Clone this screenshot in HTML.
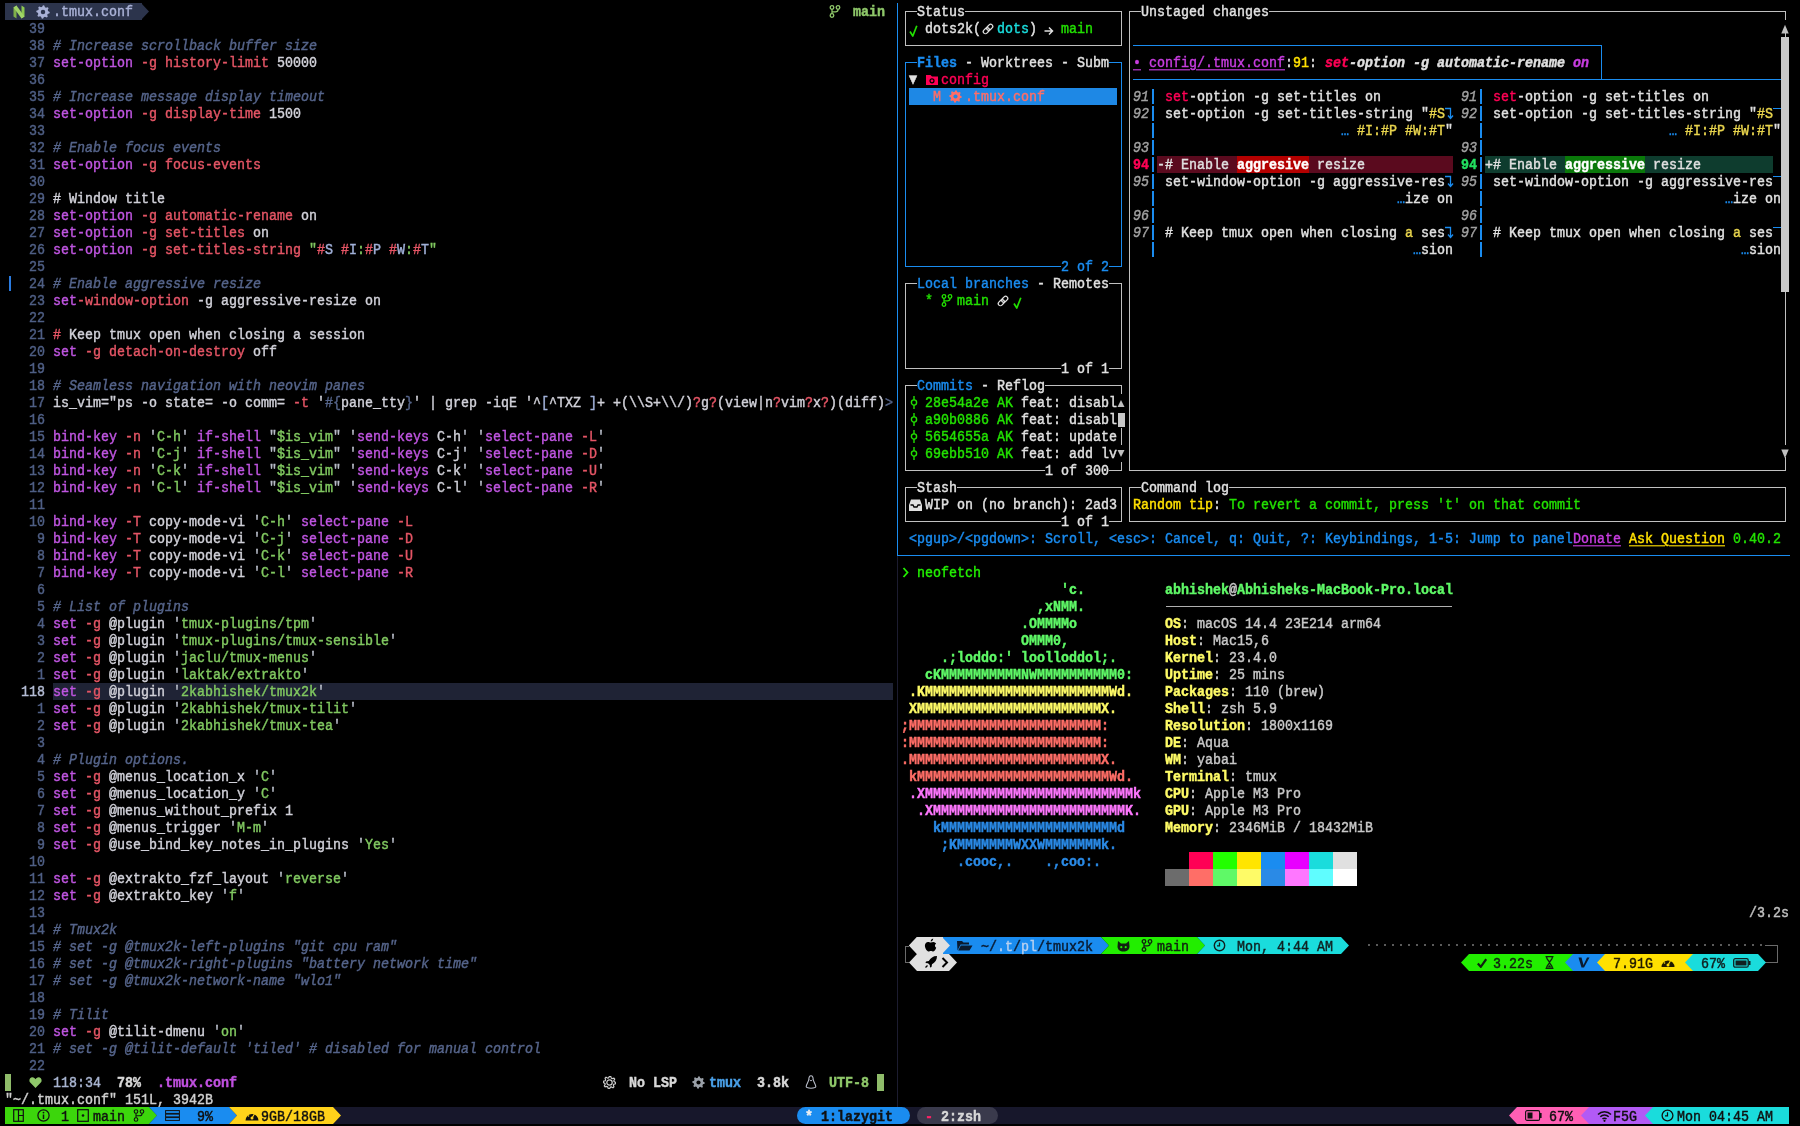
<!DOCTYPE html>
<html><head><meta charset="utf-8"><style>
html,body{margin:0;padding:0;background:#000;}
body{width:1800px;height:1126px;position:relative;overflow:hidden;font-family:"Liberation Mono",monospace;font-size:13.333px;}
#w{position:absolute;left:0;top:0;width:1800px;height:1126px;will-change:transform;}
.t{position:absolute;height:17px;line-height:17px;white-space:pre;padding-top:1px;box-sizing:border-box;-webkit-text-stroke:0.4px currentColor;transform:scaleY(1.12);transform-origin:0 13px;}
.r{position:absolute;}
</style></head><body>
<div id="w">
<div class="r" style="left:53px;top:683px;width:840px;height:17px;background:#1f2335;"></div>
<div class="t" style="left:29px;top:20px;color:#4f5f85;">39</div>
<div class="t" style="left:29px;top:37px;color:#4f5f85;">38</div>
<div class="t" style="left:53px;top:37px;color:#55648a;font-style:italic;"># Increase scrollback buffer size</div>
<div class="t" style="left:29px;top:54px;color:#4f5f85;">37</div>
<div class="t" style="left:53px;top:54px;color:#bf55e0;">set-option </div>
<div class="t" style="left:141px;top:54px;color:#e45565;">-g history-limit </div>
<div class="t" style="left:277px;top:54px;color:#d0d0d8;">50000</div>
<div class="t" style="left:29px;top:71px;color:#4f5f85;">36</div>
<div class="t" style="left:29px;top:88px;color:#4f5f85;">35</div>
<div class="t" style="left:53px;top:88px;color:#55648a;font-style:italic;"># Increase message display timeout</div>
<div class="t" style="left:29px;top:105px;color:#4f5f85;">34</div>
<div class="t" style="left:53px;top:105px;color:#bf55e0;">set-option </div>
<div class="t" style="left:141px;top:105px;color:#e45565;">-g display-time </div>
<div class="t" style="left:269px;top:105px;color:#d0d0d8;">1500</div>
<div class="t" style="left:29px;top:122px;color:#4f5f85;">33</div>
<div class="t" style="left:29px;top:139px;color:#4f5f85;">32</div>
<div class="t" style="left:53px;top:139px;color:#55648a;font-style:italic;"># Enable focus events</div>
<div class="t" style="left:29px;top:156px;color:#4f5f85;">31</div>
<div class="t" style="left:53px;top:156px;color:#bf55e0;">set-option </div>
<div class="t" style="left:141px;top:156px;color:#e45565;">-g focus-events</div>
<div class="t" style="left:29px;top:173px;color:#4f5f85;">30</div>
<div class="t" style="left:29px;top:190px;color:#4f5f85;">29</div>
<div class="t" style="left:53px;top:190px;color:#d0d0d8;"># Window title</div>
<div class="t" style="left:29px;top:207px;color:#4f5f85;">28</div>
<div class="t" style="left:53px;top:207px;color:#bf55e0;">set-option </div>
<div class="t" style="left:141px;top:207px;color:#e45565;">-g automatic-rename </div>
<div class="t" style="left:301px;top:207px;color:#d0d0d8;">on</div>
<div class="t" style="left:29px;top:224px;color:#4f5f85;">27</div>
<div class="t" style="left:53px;top:224px;color:#bf55e0;">set-option </div>
<div class="t" style="left:141px;top:224px;color:#e45565;">-g set-titles </div>
<div class="t" style="left:253px;top:224px;color:#d0d0d8;">on</div>
<div class="t" style="left:29px;top:241px;color:#4f5f85;">26</div>
<div class="t" style="left:53px;top:241px;color:#bf55e0;">set-option </div>
<div class="t" style="left:141px;top:241px;color:#e45565;">-g set-titles-string </div>
<div class="t" style="left:309px;top:241px;color:#80c860;">"</div>
<div class="t" style="left:317px;top:241px;color:#e45565;">#</div>
<div class="t" style="left:325px;top:241px;color:#a0b0d8;">S </div>
<div class="t" style="left:341px;top:241px;color:#e45565;">#</div>
<div class="t" style="left:349px;top:241px;color:#a0b0d8;">I</div>
<div class="t" style="left:357px;top:241px;color:#80c860;">:</div>
<div class="t" style="left:365px;top:241px;color:#e45565;">#</div>
<div class="t" style="left:373px;top:241px;color:#a0b0d8;">P </div>
<div class="t" style="left:389px;top:241px;color:#e45565;">#</div>
<div class="t" style="left:397px;top:241px;color:#a0b0d8;">W</div>
<div class="t" style="left:405px;top:241px;color:#80c860;">:</div>
<div class="t" style="left:413px;top:241px;color:#e45565;">#</div>
<div class="t" style="left:421px;top:241px;color:#a0b0d8;">T</div>
<div class="t" style="left:429px;top:241px;color:#80c860;">"</div>
<div class="t" style="left:29px;top:258px;color:#4f5f85;">25</div>
<div class="t" style="left:29px;top:275px;color:#4f5f85;">24</div>
<div class="t" style="left:53px;top:275px;color:#55648a;font-style:italic;"># Enable aggressive resize</div>
<div class="t" style="left:29px;top:292px;color:#4f5f85;">23</div>
<div class="t" style="left:53px;top:292px;color:#bf55e0;">set</div>
<div class="t" style="left:77px;top:292px;color:#e45565;">-window-option </div>
<div class="t" style="left:197px;top:292px;color:#d0d0d8;">-g aggressive-resize on</div>
<div class="t" style="left:29px;top:309px;color:#4f5f85;">22</div>
<div class="t" style="left:29px;top:326px;color:#4f5f85;">21</div>
<div class="t" style="left:53px;top:326px;color:#e45565;"># </div>
<div class="t" style="left:69px;top:326px;color:#d0d0d8;">Keep tmux open when closing a session</div>
<div class="t" style="left:29px;top:343px;color:#4f5f85;">20</div>
<div class="t" style="left:53px;top:343px;color:#bf55e0;">set </div>
<div class="t" style="left:85px;top:343px;color:#e45565;">-g detach-on-destroy </div>
<div class="t" style="left:253px;top:343px;color:#d0d0d8;">off</div>
<div class="t" style="left:29px;top:360px;color:#4f5f85;">19</div>
<div class="t" style="left:29px;top:377px;color:#4f5f85;">18</div>
<div class="t" style="left:53px;top:377px;color:#55648a;font-style:italic;"># Seamless navigation with neovim panes</div>
<div class="t" style="left:29px;top:394px;color:#4f5f85;">17</div>
<div class="t" style="left:53px;top:394px;color:#d0d0d8;">is_vim="ps -o state= -o comm= </div>
<div class="t" style="left:293px;top:394px;color:#e45565;">-t </div>
<div class="t" style="left:317px;top:394px;color:#d0d0d8;">'</div>
<div class="t" style="left:325px;top:394px;color:#55648a;">#{</div>
<div class="t" style="left:341px;top:394px;color:#d0d0d8;">pane_tty</div>
<div class="t" style="left:405px;top:394px;color:#55648a;">}</div>
<div class="t" style="left:413px;top:394px;color:#d0d0d8;">' | grep -iqE '^</div>
<div class="t" style="left:541px;top:394px;color:#a0b0d8;">[</div>
<div class="t" style="left:549px;top:394px;color:#d0d0d8;">^TXZ </div>
<div class="t" style="left:589px;top:394px;color:#a0b0d8;">]</div>
<div class="t" style="left:597px;top:394px;color:#d0d0d8;">+ +(\\S+\\/)</div>
<div class="t" style="left:693px;top:394px;color:#e45565;">?</div>
<div class="t" style="left:701px;top:394px;color:#d0d0d8;">g</div>
<div class="t" style="left:709px;top:394px;color:#e45565;">?</div>
<div class="t" style="left:717px;top:394px;color:#d0d0d8;">(view|n</div>
<div class="t" style="left:773px;top:394px;color:#e45565;">?</div>
<div class="t" style="left:781px;top:394px;color:#d0d0d8;">vim</div>
<div class="t" style="left:805px;top:394px;color:#e45565;">?</div>
<div class="t" style="left:813px;top:394px;color:#d0d0d8;">x</div>
<div class="t" style="left:821px;top:394px;color:#e45565;">?</div>
<div class="t" style="left:829px;top:394px;color:#d0d0d8;">)(diff)</div>
<div class="t" style="left:885px;top:394px;color:#55648a;">&gt;</div>
<div class="t" style="left:29px;top:411px;color:#4f5f85;">16</div>
<div class="t" style="left:29px;top:428px;color:#4f5f85;">15</div>
<div class="t" style="left:53px;top:428px;color:#bf55e0;">bind-key </div>
<div class="t" style="left:125px;top:428px;color:#e45565;">-n </div>
<div class="t" style="left:149px;top:428px;color:#b8bcc8;">'</div>
<div class="t" style="left:157px;top:428px;color:#80c860;">C-h</div>
<div class="t" style="left:181px;top:428px;color:#b8bcc8;">' </div>
<div class="t" style="left:197px;top:428px;color:#bf55e0;">if-shell </div>
<div class="t" style="left:269px;top:428px;color:#b8bcc8;">"</div>
<div class="t" style="left:277px;top:428px;color:#80c860;">$is_vim</div>
<div class="t" style="left:333px;top:428px;color:#b8bcc8;">" </div>
<div class="t" style="left:349px;top:428px;color:#b8bcc8;">'</div>
<div class="t" style="left:357px;top:428px;color:#bf55e0;">send-keys </div>
<div class="t" style="left:437px;top:428px;color:#d0d0d8;">C-h</div>
<div class="t" style="left:461px;top:428px;color:#b8bcc8;">' </div>
<div class="t" style="left:477px;top:428px;color:#b8bcc8;">'</div>
<div class="t" style="left:485px;top:428px;color:#bf55e0;">select-pane </div>
<div class="t" style="left:581px;top:428px;color:#e45565;">-L</div>
<div class="t" style="left:597px;top:428px;color:#b8bcc8;">'</div>
<div class="t" style="left:29px;top:445px;color:#4f5f85;">14</div>
<div class="t" style="left:53px;top:445px;color:#bf55e0;">bind-key </div>
<div class="t" style="left:125px;top:445px;color:#e45565;">-n </div>
<div class="t" style="left:149px;top:445px;color:#b8bcc8;">'</div>
<div class="t" style="left:157px;top:445px;color:#80c860;">C-j</div>
<div class="t" style="left:181px;top:445px;color:#b8bcc8;">' </div>
<div class="t" style="left:197px;top:445px;color:#bf55e0;">if-shell </div>
<div class="t" style="left:269px;top:445px;color:#b8bcc8;">"</div>
<div class="t" style="left:277px;top:445px;color:#80c860;">$is_vim</div>
<div class="t" style="left:333px;top:445px;color:#b8bcc8;">" </div>
<div class="t" style="left:349px;top:445px;color:#b8bcc8;">'</div>
<div class="t" style="left:357px;top:445px;color:#bf55e0;">send-keys </div>
<div class="t" style="left:437px;top:445px;color:#d0d0d8;">C-j</div>
<div class="t" style="left:461px;top:445px;color:#b8bcc8;">' </div>
<div class="t" style="left:477px;top:445px;color:#b8bcc8;">'</div>
<div class="t" style="left:485px;top:445px;color:#bf55e0;">select-pane </div>
<div class="t" style="left:581px;top:445px;color:#e45565;">-D</div>
<div class="t" style="left:597px;top:445px;color:#b8bcc8;">'</div>
<div class="t" style="left:29px;top:462px;color:#4f5f85;">13</div>
<div class="t" style="left:53px;top:462px;color:#bf55e0;">bind-key </div>
<div class="t" style="left:125px;top:462px;color:#e45565;">-n </div>
<div class="t" style="left:149px;top:462px;color:#b8bcc8;">'</div>
<div class="t" style="left:157px;top:462px;color:#80c860;">C-k</div>
<div class="t" style="left:181px;top:462px;color:#b8bcc8;">' </div>
<div class="t" style="left:197px;top:462px;color:#bf55e0;">if-shell </div>
<div class="t" style="left:269px;top:462px;color:#b8bcc8;">"</div>
<div class="t" style="left:277px;top:462px;color:#80c860;">$is_vim</div>
<div class="t" style="left:333px;top:462px;color:#b8bcc8;">" </div>
<div class="t" style="left:349px;top:462px;color:#b8bcc8;">'</div>
<div class="t" style="left:357px;top:462px;color:#bf55e0;">send-keys </div>
<div class="t" style="left:437px;top:462px;color:#d0d0d8;">C-k</div>
<div class="t" style="left:461px;top:462px;color:#b8bcc8;">' </div>
<div class="t" style="left:477px;top:462px;color:#b8bcc8;">'</div>
<div class="t" style="left:485px;top:462px;color:#bf55e0;">select-pane </div>
<div class="t" style="left:581px;top:462px;color:#e45565;">-U</div>
<div class="t" style="left:597px;top:462px;color:#b8bcc8;">'</div>
<div class="t" style="left:29px;top:479px;color:#4f5f85;">12</div>
<div class="t" style="left:53px;top:479px;color:#bf55e0;">bind-key </div>
<div class="t" style="left:125px;top:479px;color:#e45565;">-n </div>
<div class="t" style="left:149px;top:479px;color:#b8bcc8;">'</div>
<div class="t" style="left:157px;top:479px;color:#80c860;">C-l</div>
<div class="t" style="left:181px;top:479px;color:#b8bcc8;">' </div>
<div class="t" style="left:197px;top:479px;color:#bf55e0;">if-shell </div>
<div class="t" style="left:269px;top:479px;color:#b8bcc8;">"</div>
<div class="t" style="left:277px;top:479px;color:#80c860;">$is_vim</div>
<div class="t" style="left:333px;top:479px;color:#b8bcc8;">" </div>
<div class="t" style="left:349px;top:479px;color:#b8bcc8;">'</div>
<div class="t" style="left:357px;top:479px;color:#bf55e0;">send-keys </div>
<div class="t" style="left:437px;top:479px;color:#d0d0d8;">C-l</div>
<div class="t" style="left:461px;top:479px;color:#b8bcc8;">' </div>
<div class="t" style="left:477px;top:479px;color:#b8bcc8;">'</div>
<div class="t" style="left:485px;top:479px;color:#bf55e0;">select-pane </div>
<div class="t" style="left:581px;top:479px;color:#e45565;">-R</div>
<div class="t" style="left:597px;top:479px;color:#b8bcc8;">'</div>
<div class="t" style="left:29px;top:496px;color:#4f5f85;">11</div>
<div class="t" style="left:29px;top:513px;color:#4f5f85;">10</div>
<div class="t" style="left:53px;top:513px;color:#bf55e0;">bind-key </div>
<div class="t" style="left:125px;top:513px;color:#e45565;">-T </div>
<div class="t" style="left:149px;top:513px;color:#d0d0d8;">copy-mode-vi </div>
<div class="t" style="left:253px;top:513px;color:#b8bcc8;">'</div>
<div class="t" style="left:261px;top:513px;color:#80c860;">C-h</div>
<div class="t" style="left:285px;top:513px;color:#b8bcc8;">' </div>
<div class="t" style="left:301px;top:513px;color:#bf55e0;">select-pane </div>
<div class="t" style="left:397px;top:513px;color:#e45565;">-L</div>
<div class="t" style="left:37px;top:530px;color:#4f5f85;">9</div>
<div class="t" style="left:53px;top:530px;color:#bf55e0;">bind-key </div>
<div class="t" style="left:125px;top:530px;color:#e45565;">-T </div>
<div class="t" style="left:149px;top:530px;color:#d0d0d8;">copy-mode-vi </div>
<div class="t" style="left:253px;top:530px;color:#b8bcc8;">'</div>
<div class="t" style="left:261px;top:530px;color:#80c860;">C-j</div>
<div class="t" style="left:285px;top:530px;color:#b8bcc8;">' </div>
<div class="t" style="left:301px;top:530px;color:#bf55e0;">select-pane </div>
<div class="t" style="left:397px;top:530px;color:#e45565;">-D</div>
<div class="t" style="left:37px;top:547px;color:#4f5f85;">8</div>
<div class="t" style="left:53px;top:547px;color:#bf55e0;">bind-key </div>
<div class="t" style="left:125px;top:547px;color:#e45565;">-T </div>
<div class="t" style="left:149px;top:547px;color:#d0d0d8;">copy-mode-vi </div>
<div class="t" style="left:253px;top:547px;color:#b8bcc8;">'</div>
<div class="t" style="left:261px;top:547px;color:#80c860;">C-k</div>
<div class="t" style="left:285px;top:547px;color:#b8bcc8;">' </div>
<div class="t" style="left:301px;top:547px;color:#bf55e0;">select-pane </div>
<div class="t" style="left:397px;top:547px;color:#e45565;">-U</div>
<div class="t" style="left:37px;top:564px;color:#4f5f85;">7</div>
<div class="t" style="left:53px;top:564px;color:#bf55e0;">bind-key </div>
<div class="t" style="left:125px;top:564px;color:#e45565;">-T </div>
<div class="t" style="left:149px;top:564px;color:#d0d0d8;">copy-mode-vi </div>
<div class="t" style="left:253px;top:564px;color:#b8bcc8;">'</div>
<div class="t" style="left:261px;top:564px;color:#80c860;">C-l</div>
<div class="t" style="left:285px;top:564px;color:#b8bcc8;">' </div>
<div class="t" style="left:301px;top:564px;color:#bf55e0;">select-pane </div>
<div class="t" style="left:397px;top:564px;color:#e45565;">-R</div>
<div class="t" style="left:37px;top:581px;color:#4f5f85;">6</div>
<div class="t" style="left:37px;top:598px;color:#4f5f85;">5</div>
<div class="t" style="left:53px;top:598px;color:#55648a;font-style:italic;"># List of plugins</div>
<div class="t" style="left:37px;top:615px;color:#4f5f85;">4</div>
<div class="t" style="left:53px;top:615px;color:#bf55e0;">set </div>
<div class="t" style="left:85px;top:615px;color:#e45565;">-g </div>
<div class="t" style="left:109px;top:615px;color:#d0d0d8;">@plugin </div>
<div class="t" style="left:173px;top:615px;color:#b8bcc8;">'</div>
<div class="t" style="left:181px;top:615px;color:#80c860;">tmux-plugins/tpm</div>
<div class="t" style="left:309px;top:615px;color:#b8bcc8;">'</div>
<div class="t" style="left:37px;top:632px;color:#4f5f85;">3</div>
<div class="t" style="left:53px;top:632px;color:#bf55e0;">set </div>
<div class="t" style="left:85px;top:632px;color:#e45565;">-g </div>
<div class="t" style="left:109px;top:632px;color:#d0d0d8;">@plugin </div>
<div class="t" style="left:173px;top:632px;color:#b8bcc8;">'</div>
<div class="t" style="left:181px;top:632px;color:#80c860;">tmux-plugins/tmux-sensible</div>
<div class="t" style="left:389px;top:632px;color:#b8bcc8;">'</div>
<div class="t" style="left:37px;top:649px;color:#4f5f85;">2</div>
<div class="t" style="left:53px;top:649px;color:#bf55e0;">set </div>
<div class="t" style="left:85px;top:649px;color:#e45565;">-g </div>
<div class="t" style="left:109px;top:649px;color:#d0d0d8;">@plugin </div>
<div class="t" style="left:173px;top:649px;color:#b8bcc8;">'</div>
<div class="t" style="left:181px;top:649px;color:#80c860;">jaclu/tmux-menus</div>
<div class="t" style="left:309px;top:649px;color:#b8bcc8;">'</div>
<div class="t" style="left:37px;top:666px;color:#4f5f85;">1</div>
<div class="t" style="left:53px;top:666px;color:#bf55e0;">set </div>
<div class="t" style="left:85px;top:666px;color:#e45565;">-g </div>
<div class="t" style="left:109px;top:666px;color:#d0d0d8;">@plugin </div>
<div class="t" style="left:173px;top:666px;color:#b8bcc8;">'</div>
<div class="t" style="left:181px;top:666px;color:#80c860;">laktak/extrakto</div>
<div class="t" style="left:301px;top:666px;color:#b8bcc8;">'</div>
<div class="t" style="left:21px;top:683px;color:#b4bcd4;">118</div>
<div class="t" style="left:53px;top:683px;color:#bf55e0;">set </div>
<div class="t" style="left:85px;top:683px;color:#e45565;">-g </div>
<div class="t" style="left:109px;top:683px;color:#d0d0d8;">@plugin </div>
<div class="t" style="left:173px;top:683px;color:#b8bcc8;">'</div>
<div class="t" style="left:181px;top:683px;color:#80c860;">2kabhishek/tmux2k</div>
<div class="t" style="left:317px;top:683px;color:#b8bcc8;">'</div>
<div class="t" style="left:37px;top:700px;color:#4f5f85;">1</div>
<div class="t" style="left:53px;top:700px;color:#bf55e0;">set </div>
<div class="t" style="left:85px;top:700px;color:#e45565;">-g </div>
<div class="t" style="left:109px;top:700px;color:#d0d0d8;">@plugin </div>
<div class="t" style="left:173px;top:700px;color:#b8bcc8;">'</div>
<div class="t" style="left:181px;top:700px;color:#80c860;">2kabhishek/tmux-tilit</div>
<div class="t" style="left:349px;top:700px;color:#b8bcc8;">'</div>
<div class="t" style="left:37px;top:717px;color:#4f5f85;">2</div>
<div class="t" style="left:53px;top:717px;color:#bf55e0;">set </div>
<div class="t" style="left:85px;top:717px;color:#e45565;">-g </div>
<div class="t" style="left:109px;top:717px;color:#d0d0d8;">@plugin </div>
<div class="t" style="left:173px;top:717px;color:#b8bcc8;">'</div>
<div class="t" style="left:181px;top:717px;color:#80c860;">2kabhishek/tmux-tea</div>
<div class="t" style="left:333px;top:717px;color:#b8bcc8;">'</div>
<div class="t" style="left:37px;top:734px;color:#4f5f85;">3</div>
<div class="t" style="left:37px;top:751px;color:#4f5f85;">4</div>
<div class="t" style="left:53px;top:751px;color:#55648a;font-style:italic;"># Plugin options.</div>
<div class="t" style="left:37px;top:768px;color:#4f5f85;">5</div>
<div class="t" style="left:53px;top:768px;color:#bf55e0;">set </div>
<div class="t" style="left:85px;top:768px;color:#e45565;">-g </div>
<div class="t" style="left:109px;top:768px;color:#d0d0d8;">@menus_location_x </div>
<div class="t" style="left:253px;top:768px;color:#b8bcc8;">'</div>
<div class="t" style="left:261px;top:768px;color:#80c860;">C</div>
<div class="t" style="left:269px;top:768px;color:#b8bcc8;">'</div>
<div class="t" style="left:37px;top:785px;color:#4f5f85;">6</div>
<div class="t" style="left:53px;top:785px;color:#bf55e0;">set </div>
<div class="t" style="left:85px;top:785px;color:#e45565;">-g </div>
<div class="t" style="left:109px;top:785px;color:#d0d0d8;">@menus_location_y </div>
<div class="t" style="left:253px;top:785px;color:#b8bcc8;">'</div>
<div class="t" style="left:261px;top:785px;color:#80c860;">C</div>
<div class="t" style="left:269px;top:785px;color:#b8bcc8;">'</div>
<div class="t" style="left:37px;top:802px;color:#4f5f85;">7</div>
<div class="t" style="left:53px;top:802px;color:#bf55e0;">set </div>
<div class="t" style="left:85px;top:802px;color:#e45565;">-g </div>
<div class="t" style="left:109px;top:802px;color:#d0d0d8;">@menus_without_prefix 1</div>
<div class="t" style="left:37px;top:819px;color:#4f5f85;">8</div>
<div class="t" style="left:53px;top:819px;color:#bf55e0;">set </div>
<div class="t" style="left:85px;top:819px;color:#e45565;">-g </div>
<div class="t" style="left:109px;top:819px;color:#d0d0d8;">@menus_trigger </div>
<div class="t" style="left:229px;top:819px;color:#b8bcc8;">'</div>
<div class="t" style="left:237px;top:819px;color:#80c860;">M-m</div>
<div class="t" style="left:261px;top:819px;color:#b8bcc8;">'</div>
<div class="t" style="left:37px;top:836px;color:#4f5f85;">9</div>
<div class="t" style="left:53px;top:836px;color:#bf55e0;">set </div>
<div class="t" style="left:85px;top:836px;color:#e45565;">-g </div>
<div class="t" style="left:109px;top:836px;color:#d0d0d8;">@use_bind_key_notes_in_plugins </div>
<div class="t" style="left:357px;top:836px;color:#b8bcc8;">'</div>
<div class="t" style="left:365px;top:836px;color:#80c860;">Yes</div>
<div class="t" style="left:389px;top:836px;color:#b8bcc8;">'</div>
<div class="t" style="left:29px;top:853px;color:#4f5f85;">10</div>
<div class="t" style="left:29px;top:870px;color:#4f5f85;">11</div>
<div class="t" style="left:53px;top:870px;color:#bf55e0;">set </div>
<div class="t" style="left:85px;top:870px;color:#e45565;">-g </div>
<div class="t" style="left:109px;top:870px;color:#d0d0d8;">@extrakto_fzf_layout </div>
<div class="t" style="left:277px;top:870px;color:#b8bcc8;">'</div>
<div class="t" style="left:285px;top:870px;color:#80c860;">reverse</div>
<div class="t" style="left:341px;top:870px;color:#b8bcc8;">'</div>
<div class="t" style="left:29px;top:887px;color:#4f5f85;">12</div>
<div class="t" style="left:53px;top:887px;color:#bf55e0;">set </div>
<div class="t" style="left:85px;top:887px;color:#e45565;">-g </div>
<div class="t" style="left:109px;top:887px;color:#d0d0d8;">@extrakto_key </div>
<div class="t" style="left:221px;top:887px;color:#b8bcc8;">'</div>
<div class="t" style="left:229px;top:887px;color:#80c860;">f</div>
<div class="t" style="left:237px;top:887px;color:#b8bcc8;">'</div>
<div class="t" style="left:29px;top:904px;color:#4f5f85;">13</div>
<div class="t" style="left:29px;top:921px;color:#4f5f85;">14</div>
<div class="t" style="left:53px;top:921px;color:#55648a;font-style:italic;"># Tmux2k</div>
<div class="t" style="left:29px;top:938px;color:#4f5f85;">15</div>
<div class="t" style="left:53px;top:938px;color:#55648a;font-style:italic;"># set -g @tmux2k-left-plugins "git cpu ram"</div>
<div class="t" style="left:29px;top:955px;color:#4f5f85;">16</div>
<div class="t" style="left:53px;top:955px;color:#55648a;font-style:italic;"># set -g @tmux2k-right-plugins "battery network time"</div>
<div class="t" style="left:29px;top:972px;color:#4f5f85;">17</div>
<div class="t" style="left:53px;top:972px;color:#55648a;font-style:italic;"># set -g @tmux2k-network-name "wlo1"</div>
<div class="t" style="left:29px;top:989px;color:#4f5f85;">18</div>
<div class="t" style="left:29px;top:1006px;color:#4f5f85;">19</div>
<div class="t" style="left:53px;top:1006px;color:#55648a;font-style:italic;"># Tilit</div>
<div class="t" style="left:29px;top:1023px;color:#4f5f85;">20</div>
<div class="t" style="left:53px;top:1023px;color:#bf55e0;">set </div>
<div class="t" style="left:85px;top:1023px;color:#e45565;">-g </div>
<div class="t" style="left:109px;top:1023px;color:#d0d0d8;">@tilit-dmenu </div>
<div class="t" style="left:213px;top:1023px;color:#b8bcc8;">'</div>
<div class="t" style="left:221px;top:1023px;color:#80c860;">on</div>
<div class="t" style="left:237px;top:1023px;color:#b8bcc8;">'</div>
<div class="t" style="left:29px;top:1040px;color:#4f5f85;">21</div>
<div class="t" style="left:53px;top:1040px;color:#55648a;font-style:italic;"># set -g @tilit-default 'tiled' # disabled for manual control</div>
<div class="t" style="left:29px;top:1057px;color:#4f5f85;">22</div>
<div class="r" style="left:9px;top:276px;width:2px;height:15px;background:#2a7be0;"></div>
<div class="r" style="left:5px;top:3px;width:137px;height:17px;background:#2c344c;"></div>
<svg class="r" style="left:141px;top:3px;" width="8" height="17" viewBox="0 0 8 17"><path d="M0 0 L8 8.5 L0 17 Z" fill="#2c344c"/></svg>
<svg class="r" style="left:13px;top:5px;" width="12" height="14" viewBox="0 0 12 14"><path d="M0.5 2.5 L3.5 0.5 L3.5 13.5 L0.5 11.5 Z" fill="#7fb04a"/><path d="M8.5 0.5 L11.5 2.5 L11.5 11.5 L8.5 13.5 Z" fill="#8cc850"/><path d="M0.5 2.5 L3.5 0.5 L11.5 11.5 L8.5 13.5 Z" fill="#a0d468"/></svg>
<svg class="r" style="left:36px;top:5px;" width="14" height="14" viewBox="0 0 14 14"><polygon points="7.00,0.28 8.31,0.41 8.93,2.34 9.80,2.81 11.75,2.25 12.59,3.27 11.66,5.07 11.94,6.02 13.72,7.00 13.59,8.31 11.66,8.93 11.19,9.80 11.75,11.75 10.73,12.59 8.93,11.66 7.98,11.94 7.00,13.72 5.69,13.59 5.07,11.66 4.20,11.19 2.25,11.75 1.41,10.73 2.34,8.93 2.06,7.98 0.28,7.00 0.41,5.69 2.34,5.07 2.81,4.20 2.25,2.25 3.27,1.41 5.07,2.34 6.02,2.06" fill="#a9b1d6"/><circle cx="7.0" cy="7.0" r="4.787999999999999" fill="#a9b1d6"/><circle cx="7.0" cy="7.0" r="2.24" fill="#2c344c"/></svg>
<div class="t" style="left:53px;top:3px;color:#a9b1d6;">.tmux.conf</div>
<svg class="r" style="left:829px;top:5px" width="12" height="13" viewBox="0 0 12 13"><circle cx="3" cy="2.5" r="1.8" fill="none" stroke="#8fc86a" stroke-width="1.3"/><circle cx="9" cy="2.5" r="1.8" fill="none" stroke="#8fc86a" stroke-width="1.3"/><circle cx="3" cy="10.5" r="1.8" fill="none" stroke="#8fc86a" stroke-width="1.3"/><path d="M3 4.3 V8.7 M9 4.3 V5 Q9 6.8 6.5 6.8 H3" fill="none" stroke="#8fc86a" stroke-width="1.3"/></svg>
<div class="t" style="left:853px;top:3px;color:#8fc86a;font-weight:bold;">main</div>
<div class="r" style="left:5px;top:1074px;width:6px;height:17px;background:#8fbc6a;"></div>
<svg class="r" style="left:29px;top:1076px;" width="13" height="13" viewBox="0 0 13 13"><path d="M6.5 12 L1.2 6.6 C-0.5 4.6 0.6 1.2 3.4 1.2 C4.9 1.2 5.9 2.2 6.5 3.2 C7.1 2.2 8.1 1.2 9.6 1.2 C12.4 1.2 13.5 4.6 11.8 6.6 Z" fill="#8fc86a"/></svg>
<div class="t" style="left:53px;top:1074px;color:#a8b4d0;">118:34</div>
<div class="t" style="left:117px;top:1074px;color:#d8d8d8;font-weight:bold;">78%</div>
<div class="t" style="left:157px;top:1074px;color:#c050e0;font-weight:bold;">.tmux.conf</div>
<svg class="r" style="left:603px;top:1076px;" width="13" height="13" viewBox="0 0 13 13"><polygon points="6.50,0.26 7.72,0.38 8.29,2.18 9.10,2.61 10.91,2.09 11.69,3.03 10.82,4.71 11.09,5.59 12.74,6.50 12.62,7.72 10.82,8.29 10.39,9.10 10.91,10.91 9.97,11.69 8.29,10.82 7.41,11.09 6.50,12.74 5.28,12.62 4.71,10.82 3.90,10.39 2.09,10.91 1.31,9.97 2.18,8.29 1.91,7.41 0.26,6.50 0.38,5.28 2.18,4.71 2.61,3.90 2.09,2.09 3.03,1.31 4.71,2.18 5.59,1.91" fill="none" stroke="#d0d0d0" stroke-width="1.2"/><circle cx="6.5" cy="6.5" r="2.704" fill="none" stroke="#d0d0d0" stroke-width="1.2"/></svg>
<div class="t" style="left:629px;top:1074px;color:#d8d8d8;font-weight:bold;">No LSP</div>
<svg class="r" style="left:692px;top:1076px;" width="13" height="13" viewBox="0 0 13 13"><polygon points="6.50,0.26 7.72,0.38 8.29,2.18 9.10,2.61 10.91,2.09 11.69,3.03 10.82,4.71 11.09,5.59 12.74,6.50 12.62,7.72 10.82,8.29 10.39,9.10 10.91,10.91 9.97,11.69 8.29,10.82 7.41,11.09 6.50,12.74 5.28,12.62 4.71,10.82 3.90,10.39 2.09,10.91 1.31,9.97 2.18,8.29 1.91,7.41 0.26,6.50 0.38,5.28 2.18,4.71 2.61,3.90 2.09,2.09 3.03,1.31 4.71,2.18 5.59,1.91" fill="#9aa0a8"/><circle cx="6.5" cy="6.5" r="4.446" fill="#9aa0a8"/><circle cx="6.5" cy="6.5" r="2.08" fill="#000"/></svg>
<div class="t" style="left:709px;top:1074px;color:#4aa0e8;font-weight:bold;">tmux</div>
<div class="t" style="left:757px;top:1074px;color:#d8d8d8;font-weight:bold;">3.8k</div>
<svg class="r" style="left:805px;top:1075px;" width="12" height="14" viewBox="0 0 12 14"><path d="M6 0.8 C4.4 0.8 3.8 2.6 3.8 4.6 C3.8 6 1.2 9.5 1.2 11.6 C1.2 12.8 2.6 13.2 6 13.2 C9.4 13.2 10.8 12.8 10.8 11.6 C10.8 9.5 8.2 6 8.2 4.6 C8.2 2.6 7.6 0.8 6 0.8 Z" fill="none" stroke="#b8bcc8" stroke-width="1.1"/><path d="M4.6 4.8 L6 6 L7.4 4.8" fill="none" stroke="#b8bcc8" stroke-width="0.9"/></svg>
<div class="t" style="left:829px;top:1074px;color:#8fc86a;font-weight:bold;">UTF-8</div>
<div class="r" style="left:877px;top:1074px;width:7px;height:17px;background:#8fbc6a;"></div>
<div class="t" style="left:5px;top:1091px;color:#d0d0d0;">"~/.tmux.conf" 151L, 3942B</div>
<div class="r" style="left:897px;top:3px;width:1px;height:553px;background:#1a8cf0;"></div>
<div class="r" style="left:897px;top:556px;width:1px;height:552px;background:#1c1c30;"></div>
<div class="r" style="left:897px;top:555px;width:893px;height:1px;background:#1a8cf0;"></div>
<div class="r" style="left:905px;top:11px;width:217px;height:1px;background:#c0c0c0;"></div>
<div class="r" style="left:905px;top:45px;width:217px;height:1px;background:#c0c0c0;"></div>
<div class="r" style="left:905px;top:11px;width:1px;height:35px;background:#c0c0c0;"></div>
<div class="r" style="left:1121px;top:11px;width:1px;height:35px;background:#c0c0c0;"></div>
<div class="r" style="left:917px;top:3px;width:48px;height:17px;background:#000;"></div>
<div class="t" style="left:917px;top:3px;color:#e0e0e0;">Status</div>
<svg class="r" style="left:909px;top:25px;" width="9" height="12" viewBox="0 0 9 12"><path d="M1 6.5 L3.8 11 L7.8 0.8" fill="none" stroke="#22e000" stroke-width="1.7" stroke-linejoin="round"/></svg>
<div class="t" style="left:925px;top:20px;color:#e0e0e0;">dots2k(</div>
<svg class="r" style="left:982px;top:23px;" width="12" height="12" viewBox="0 0 12 12"><g transform="rotate(-45 6 6)"><rect x="0.2" y="3.9" width="6.8" height="4.2" rx="2.1" fill="none" stroke="#e0e0e0" stroke-width="1.3"/><rect x="5" y="3.9" width="6.8" height="4.2" rx="2.1" fill="none" stroke="#e0e0e0" stroke-width="1.3"/></g></svg>
<div class="t" style="left:997px;top:20px;color:#1adcdc;">dots</div>
<div class="t" style="left:1029px;top:20px;color:#e0e0e0;">)</div>
<svg class="r" style="left:1044px;top:26px;" width="10" height="10" viewBox="0 0 10 10"><path d="M0.5 5 H8.5 M5 1.5 L8.5 5 L5 8.5" fill="none" stroke="#e0e0e0" stroke-width="1.5"/></svg>
<div class="t" style="left:1061px;top:20px;color:#22e000;">main</div>
<div class="r" style="left:905px;top:62px;width:217px;height:1px;background:#1a8cf0;"></div>
<div class="r" style="left:905px;top:266px;width:217px;height:1px;background:#1a8cf0;"></div>
<div class="r" style="left:905px;top:62px;width:1px;height:205px;background:#1a8cf0;"></div>
<div class="r" style="left:1121px;top:62px;width:1px;height:205px;background:#1a8cf0;"></div>
<div class="r" style="left:917px;top:54px;width:40px;height:17px;background:#000;"></div>
<div class="t" style="left:917px;top:54px;color:#1a8cf0;font-weight:bold;">Files</div>
<div class="r" style="left:957px;top:54px;width:152px;height:17px;background:#000;"></div>
<div class="t" style="left:957px;top:54px;color:#e0e0e0;"> - Worktrees - Subm</div>
<div class="t" style="left:909px;top:71px;color:#e0e0e0;">▼</div>
<svg class="r" style="left:926px;top:74px;" width="12" height="11" viewBox="0 0 12 11"><path d="M0 1 H4.5 L6 2.5 H12 V11 H0 Z" fill="#ff0055"/><circle cx="6" cy="6.8" r="2" fill="none" stroke="#000" stroke-width="1.2"/></svg>
<div class="t" style="left:941px;top:71px;color:#ff0055;">config</div>
<div class="r" style="left:909px;top:88px;width:208px;height:17px;background:#1e88e5;"></div>
<div class="t" style="left:933px;top:88px;color:#ff6e67;">M</div>
<svg class="r" style="left:949px;top:90px;" width="13" height="13" viewBox="0 0 13 13"><polygon points="6.50,0.26 7.72,0.38 8.29,2.18 9.10,2.61 10.91,2.09 11.69,3.03 10.82,4.71 11.09,5.59 12.74,6.50 12.62,7.72 10.82,8.29 10.39,9.10 10.91,10.91 9.97,11.69 8.29,10.82 7.41,11.09 6.50,12.74 5.28,12.62 4.71,10.82 3.90,10.39 2.09,10.91 1.31,9.97 2.18,8.29 1.91,7.41 0.26,6.50 0.38,5.28 2.18,4.71 2.61,3.90 2.09,2.09 3.03,1.31 4.71,2.18 5.59,1.91" fill="#ff6e67"/><circle cx="6.5" cy="6.5" r="4.446" fill="#ff6e67"/><circle cx="6.5" cy="6.5" r="2.08" fill="#1e88e5"/></svg>
<div class="t" style="left:965px;top:88px;color:#ff6e67;">.tmux.conf</div>
<div class="r" style="left:1061px;top:258px;width:48px;height:17px;background:#000;"></div>
<div class="t" style="left:1061px;top:258px;color:#1a8cf0;">2 of 2</div>
<div class="r" style="left:905px;top:283px;width:217px;height:1px;background:#c0c0c0;"></div>
<div class="r" style="left:905px;top:368px;width:217px;height:1px;background:#c0c0c0;"></div>
<div class="r" style="left:905px;top:283px;width:1px;height:86px;background:#c0c0c0;"></div>
<div class="r" style="left:1121px;top:283px;width:1px;height:86px;background:#c0c0c0;"></div>
<div class="r" style="left:917px;top:275px;width:112px;height:17px;background:#000;"></div>
<div class="t" style="left:917px;top:275px;color:#1a8cf0;">Local branches</div>
<div class="r" style="left:1029px;top:275px;width:80px;height:17px;background:#000;"></div>
<div class="t" style="left:1029px;top:275px;color:#e0e0e0;"> - Remotes</div>
<div class="t" style="left:925px;top:292px;color:#22e000;">*</div>
<svg class="r" style="left:941px;top:294px" width="12" height="13" viewBox="0 0 12 13"><circle cx="3" cy="2.5" r="1.8" fill="none" stroke="#22e000" stroke-width="1.3"/><circle cx="9" cy="2.5" r="1.8" fill="none" stroke="#22e000" stroke-width="1.3"/><circle cx="3" cy="10.5" r="1.8" fill="none" stroke="#22e000" stroke-width="1.3"/><path d="M3 4.3 V8.7 M9 4.3 V5 Q9 6.8 6.5 6.8 H3" fill="none" stroke="#22e000" stroke-width="1.3"/></svg>
<div class="t" style="left:957px;top:292px;color:#22e000;">main</div>
<svg class="r" style="left:997px;top:295px;" width="12" height="12" viewBox="0 0 12 12"><g transform="rotate(-45 6 6)"><rect x="0.2" y="3.9" width="6.8" height="4.2" rx="2.1" fill="none" stroke="#e0e0e0" stroke-width="1.3"/><rect x="5" y="3.9" width="6.8" height="4.2" rx="2.1" fill="none" stroke="#e0e0e0" stroke-width="1.3"/></g></svg>
<svg class="r" style="left:1013px;top:297px;" width="9" height="12" viewBox="0 0 9 12"><path d="M1 6.5 L3.8 11 L7.8 0.8" fill="none" stroke="#22e000" stroke-width="1.7" stroke-linejoin="round"/></svg>
<div class="r" style="left:1061px;top:360px;width:48px;height:17px;background:#000;"></div>
<div class="t" style="left:1061px;top:360px;color:#e0e0e0;">1 of 1</div>
<div class="r" style="left:905px;top:385px;width:217px;height:1px;background:#c0c0c0;"></div>
<div class="r" style="left:905px;top:470px;width:217px;height:1px;background:#c0c0c0;"></div>
<div class="r" style="left:905px;top:385px;width:1px;height:86px;background:#c0c0c0;"></div>
<div class="r" style="left:1121px;top:385px;width:1px;height:86px;background:#c0c0c0;"></div>
<div class="r" style="left:917px;top:377px;width:56px;height:17px;background:#000;"></div>
<div class="t" style="left:917px;top:377px;color:#1a8cf0;">Commits</div>
<div class="r" style="left:973px;top:377px;width:72px;height:17px;background:#000;"></div>
<div class="t" style="left:973px;top:377px;color:#e0e0e0;"> - Reflog</div>
<svg class="r" style="left:910px;top:394px;" width="8" height="17" viewBox="0 0 8 17"><line x1="4" y1="0" x2="4" y2="17" stroke="#22e000" stroke-width="0"/><circle cx="4" cy="8.5" r="2.6" fill="none" stroke="#22e000" stroke-width="1.4"/><line x1="4" y1="2" x2="4" y2="5.9" stroke="#22e000" stroke-width="1.4"/><line x1="4" y1="11.1" x2="4" y2="15" stroke="#22e000" stroke-width="1.4"/></svg>
<div class="t" style="left:925px;top:394px;color:#22e000;">28e54a2e</div>
<div class="t" style="left:997px;top:394px;color:#22e000;">AK</div>
<div class="t" style="left:1021px;top:394px;color:#e0e0e0;">feat: disabl</div>
<svg class="r" style="left:910px;top:411px;" width="8" height="17" viewBox="0 0 8 17"><line x1="4" y1="0" x2="4" y2="17" stroke="#22e000" stroke-width="0"/><circle cx="4" cy="8.5" r="2.6" fill="none" stroke="#22e000" stroke-width="1.4"/><line x1="4" y1="2" x2="4" y2="5.9" stroke="#22e000" stroke-width="1.4"/><line x1="4" y1="11.1" x2="4" y2="15" stroke="#22e000" stroke-width="1.4"/></svg>
<div class="t" style="left:925px;top:411px;color:#22e000;">a90b0886</div>
<div class="t" style="left:997px;top:411px;color:#22e000;">AK</div>
<div class="t" style="left:1021px;top:411px;color:#e0e0e0;">feat: disabl</div>
<svg class="r" style="left:910px;top:428px;" width="8" height="17" viewBox="0 0 8 17"><line x1="4" y1="0" x2="4" y2="17" stroke="#22e000" stroke-width="0"/><circle cx="4" cy="8.5" r="2.6" fill="none" stroke="#22e000" stroke-width="1.4"/><line x1="4" y1="2" x2="4" y2="5.9" stroke="#22e000" stroke-width="1.4"/><line x1="4" y1="11.1" x2="4" y2="15" stroke="#22e000" stroke-width="1.4"/></svg>
<div class="t" style="left:925px;top:428px;color:#22e000;">5654655a</div>
<div class="t" style="left:997px;top:428px;color:#22e000;">AK</div>
<div class="t" style="left:1021px;top:428px;color:#e0e0e0;">feat: update</div>
<svg class="r" style="left:910px;top:445px;" width="8" height="17" viewBox="0 0 8 17"><line x1="4" y1="0" x2="4" y2="17" stroke="#22e000" stroke-width="0"/><circle cx="4" cy="8.5" r="2.6" fill="none" stroke="#22e000" stroke-width="1.4"/><line x1="4" y1="2" x2="4" y2="5.9" stroke="#22e000" stroke-width="1.4"/><line x1="4" y1="11.1" x2="4" y2="15" stroke="#22e000" stroke-width="1.4"/></svg>
<div class="t" style="left:925px;top:445px;color:#22e000;">69ebb510</div>
<div class="t" style="left:997px;top:445px;color:#22e000;">AK</div>
<div class="t" style="left:1021px;top:445px;color:#e0e0e0;">feat: add lv</div>
<div class="r" style="left:1117px;top:394px;width:8px;height:17px;background:#000;"></div>
<div class="r" style="left:1117px;top:411px;width:8px;height:17px;background:#000;"></div>
<div class="r" style="left:1117px;top:445px;width:8px;height:17px;background:#000;"></div>
<svg class="r" style="left:1117px;top:394px;" width="8" height="17" viewBox="0 0 8 17"><path d="M0.5 13 L4 6 L7.5 13 Z" fill="#c0c0c0"/></svg>
<div class="r" style="left:1118px;top:413px;width:7px;height:14px;background:#c8c8c8;"></div>
<svg class="r" style="left:1117px;top:445px;" width="8" height="17" viewBox="0 0 8 17"><path d="M0.5 5 L4 12 L7.5 5 Z" fill="#c0c0c0"/></svg>
<div class="r" style="left:1045px;top:462px;width:64px;height:17px;background:#000;"></div>
<div class="t" style="left:1045px;top:462px;color:#e0e0e0;">1 of 300</div>
<div class="r" style="left:905px;top:487px;width:217px;height:1px;background:#c0c0c0;"></div>
<div class="r" style="left:905px;top:521px;width:217px;height:1px;background:#c0c0c0;"></div>
<div class="r" style="left:905px;top:487px;width:1px;height:35px;background:#c0c0c0;"></div>
<div class="r" style="left:1121px;top:487px;width:1px;height:35px;background:#c0c0c0;"></div>
<div class="r" style="left:917px;top:479px;width:40px;height:17px;background:#000;"></div>
<div class="t" style="left:917px;top:479px;color:#e0e0e0;">Stash</div>
<svg class="r" style="left:909px;top:499px;" width="13" height="12" viewBox="0 0 13 12"><path d="M2 0.5 H11 L13 6 V12 H0 V6 Z" fill="#e0e0e0"/><path d="M1.5 6 H4 L5 8 H8 L9 6 H11.5" fill="none" stroke="#000" stroke-width="1.3"/></svg>
<div class="t" style="left:925px;top:496px;color:#e0e0e0;">WIP on (no branch): 2ad3</div>
<div class="r" style="left:1061px;top:513px;width:48px;height:17px;background:#000;"></div>
<div class="t" style="left:1061px;top:513px;color:#e0e0e0;">1 of 1</div>
<div class="t" style="left:909px;top:530px;color:#1a8cf0;">&lt;pgup&gt;/&lt;pgdown&gt;: Scroll, &lt;esc&gt;: Cancel, q: Quit, ?: Keybindings, 1-5: Jump to panel</div>
<div class="t" style="left:1573px;top:530px;color:#c83de0;text-decoration:underline;text-decoration-color:#c83de0;text-underline-offset:2px;">Donate</div>
<div class="t" style="left:1629px;top:530px;color:#ffe000;text-decoration:underline;text-decoration-color:#ffe000;text-underline-offset:2px;">Ask Question</div>
<div class="t" style="left:1733px;top:530px;color:#22e000;">0.40.2</div>
<div class="r" style="left:1129px;top:11px;width:657px;height:1px;background:#c0c0c0;"></div>
<div class="r" style="left:1129px;top:470px;width:657px;height:1px;background:#c0c0c0;"></div>
<div class="r" style="left:1129px;top:11px;width:1px;height:460px;background:#c0c0c0;"></div>
<div class="r" style="left:1785px;top:11px;width:1px;height:460px;background:#c0c0c0;"></div>
<div class="r" style="left:1141px;top:3px;width:128px;height:17px;background:#000;"></div>
<div class="t" style="left:1141px;top:3px;color:#e0e0e0;">Unstaged changes</div>
<div class="r" style="left:1781px;top:20px;width:8px;height:442px;background:#000;"></div>
<svg class="r" style="left:1781px;top:20px;" width="8" height="17" viewBox="0 0 8 17"><path d="M0.3 13.5 L4 4.8 L7.7 13.5 Z" fill="#c0c0c0"/></svg>
<div class="r" style="left:1785px;top:33px;width:1px;height:4px;background:#c0c0c0;"></div>
<div class="r" style="left:1781px;top:37px;width:8px;height:255px;background:#c8c8c8;"></div>
<div class="r" style="left:1785px;top:292px;width:1px;height:153px;background:#c0c0c0;"></div>
<svg class="r" style="left:1781px;top:445px;" width="8" height="17" viewBox="0 0 8 17"><path d="M0.3 4.5 L4 13.2 L7.7 4.5 Z" fill="#c0c0c0"/></svg>
<div class="r" style="left:1785px;top:457px;width:1px;height:5px;background:#c0c0c0;"></div>
<div class="r" style="left:1133px;top:45px;width:464px;height:1px;background:#1a8cf0;"></div>
<div class="r" style="left:1601px;top:45px;width:1px;height:35px;background:#1a8cf0;"></div>
<div class="r" style="left:1593px;top:45px;width:9px;height:1px;background:#1a8cf0;"></div>
<div class="r" style="left:1133px;top:79px;width:648px;height:1px;background:#1a8cf0;"></div>
<div class="t" style="left:1133px;top:54px;color:#c83de0;text-decoration:underline;text-decoration-color:#c83de0;text-underline-offset:2px;">•</div>
<div class="t" style="left:1149px;top:54px;color:#c83de0;text-decoration:underline;text-decoration-color:#c83de0;text-underline-offset:2px;">config/.tmux.conf</div>
<div class="t" style="left:1285px;top:54px;color:#e0e0e0;">:</div>
<div class="t" style="left:1293px;top:54px;color:#ffe000;">91</div>
<div class="t" style="left:1309px;top:54px;color:#e0e0e0;">:</div>
<div class="t" style="left:1325px;top:54px;color:#ff0055;font-weight:bold;font-style:italic;">set</div>
<div class="t" style="left:1349px;top:54px;color:#e0e0e0;font-weight:bold;font-style:italic;">-option -g automatic-rename</div>
<div class="t" style="left:1573px;top:54px;color:#c83de0;font-weight:bold;font-style:italic;">on</div>
<div class="r" style="left:1152px;top:89px;width:2px;height:15px;background:#1a8cf0;"></div>
<div class="r" style="left:1152px;top:106px;width:2px;height:15px;background:#1a8cf0;"></div>
<div class="r" style="left:1152px;top:123px;width:2px;height:15px;background:#1a8cf0;"></div>
<div class="r" style="left:1152px;top:140px;width:2px;height:15px;background:#1a8cf0;"></div>
<div class="r" style="left:1152px;top:157px;width:2px;height:15px;background:#1a8cf0;"></div>
<div class="r" style="left:1152px;top:174px;width:2px;height:15px;background:#1a8cf0;"></div>
<div class="r" style="left:1152px;top:191px;width:2px;height:15px;background:#1a8cf0;"></div>
<div class="r" style="left:1152px;top:208px;width:2px;height:15px;background:#1a8cf0;"></div>
<div class="r" style="left:1152px;top:225px;width:2px;height:15px;background:#1a8cf0;"></div>
<div class="r" style="left:1152px;top:242px;width:2px;height:15px;background:#1a8cf0;"></div>
<div class="t" style="left:1133px;top:88px;color:#a0a0a0;font-style:italic;">91</div>
<div class="t" style="left:1165px;top:88px;color:#ff0055;">set</div>
<div class="t" style="left:1189px;top:88px;color:#e0e0e0;">-option -g set-titles on</div>
<div class="t" style="left:1133px;top:105px;color:#a0a0a0;font-style:italic;">92</div>
<div class="t" style="left:1165px;top:105px;color:#e0e0e0;">set-option -g set-titles-string "</div>
<div class="t" style="left:1429px;top:105px;color:#e8d44d;">#S</div>
<svg class="r" style="left:1445px;top:105px;" width="9" height="17" viewBox="0 0 9 17"><path d="M0 3.5 H5.5 V13 M3 10.5 L5.5 13.5 L8 10.5" fill="none" stroke="#1a8cf0" stroke-width="1.3"/></svg>
<div class="t" style="left:1341px;top:122px;color:#1a8cf0;">…</div>
<div class="t" style="left:1357px;top:122px;color:#e8d44d;">#I:#P #W:#T</div>
<div class="t" style="left:1445px;top:122px;color:#e0e0e0;">"</div>
<div class="t" style="left:1133px;top:139px;color:#a0a0a0;font-style:italic;">93</div>
<div class="t" style="left:1133px;top:156px;color:#ff0055;font-weight:bold;">94</div>
<div class="r" style="left:1157px;top:156px;width:296px;height:17px;background:#5a0a1e;"></div>
<div class="r" style="left:1237px;top:156px;width:72px;height:17px;background:#b40000;"></div>
<div class="t" style="left:1157px;top:156px;color:#e0e0e0;">-# Enable </div>
<div class="t" style="left:1237px;top:156px;color:#ffffff;font-weight:bold;">aggresive</div>
<div class="t" style="left:1309px;top:156px;color:#e0e0e0;"> resize</div>
<div class="t" style="left:1133px;top:173px;color:#a0a0a0;font-style:italic;">95</div>
<div class="t" style="left:1165px;top:173px;color:#e0e0e0;">set-window-option -g aggressive-res</div>
<svg class="r" style="left:1445px;top:173px;" width="9" height="17" viewBox="0 0 9 17"><path d="M0 3.5 H5.5 V13 M3 10.5 L5.5 13.5 L8 10.5" fill="none" stroke="#1a8cf0" stroke-width="1.3"/></svg>
<div class="t" style="left:1397px;top:190px;color:#1a8cf0;">…</div>
<div class="t" style="left:1405px;top:190px;color:#e0e0e0;">ize on</div>
<div class="t" style="left:1133px;top:207px;color:#a0a0a0;font-style:italic;">96</div>
<div class="t" style="left:1133px;top:224px;color:#a0a0a0;font-style:italic;">97</div>
<div class="t" style="left:1165px;top:224px;color:#e0e0e0;"># Keep tmux open when closing </div>
<div class="t" style="left:1405px;top:224px;color:#e8d44d;">a</div>
<div class="t" style="left:1413px;top:224px;color:#e0e0e0;"> ses</div>
<svg class="r" style="left:1445px;top:224px;" width="9" height="17" viewBox="0 0 9 17"><path d="M0 3.5 H5.5 V13 M3 10.5 L5.5 13.5 L8 10.5" fill="none" stroke="#1a8cf0" stroke-width="1.3"/></svg>
<div class="t" style="left:1413px;top:241px;color:#1a8cf0;">…</div>
<div class="t" style="left:1421px;top:241px;color:#e0e0e0;">sion</div>
<div class="r" style="left:1480px;top:89px;width:2px;height:15px;background:#1a8cf0;"></div>
<div class="r" style="left:1480px;top:106px;width:2px;height:15px;background:#1a8cf0;"></div>
<div class="r" style="left:1480px;top:123px;width:2px;height:15px;background:#1a8cf0;"></div>
<div class="r" style="left:1480px;top:140px;width:2px;height:15px;background:#1a8cf0;"></div>
<div class="r" style="left:1480px;top:157px;width:2px;height:15px;background:#1a8cf0;"></div>
<div class="r" style="left:1480px;top:174px;width:2px;height:15px;background:#1a8cf0;"></div>
<div class="r" style="left:1480px;top:191px;width:2px;height:15px;background:#1a8cf0;"></div>
<div class="r" style="left:1480px;top:208px;width:2px;height:15px;background:#1a8cf0;"></div>
<div class="r" style="left:1480px;top:225px;width:2px;height:15px;background:#1a8cf0;"></div>
<div class="r" style="left:1480px;top:242px;width:2px;height:15px;background:#1a8cf0;"></div>
<div class="t" style="left:1461px;top:88px;color:#a0a0a0;font-style:italic;">91</div>
<div class="t" style="left:1493px;top:88px;color:#ff0055;">set</div>
<div class="t" style="left:1517px;top:88px;color:#e0e0e0;">-option -g set-titles on</div>
<div class="t" style="left:1461px;top:105px;color:#a0a0a0;font-style:italic;">92</div>
<div class="t" style="left:1493px;top:105px;color:#e0e0e0;">set-option -g set-titles-string "</div>
<div class="t" style="left:1757px;top:105px;color:#e8d44d;">#S</div>
<div class="r" style="left:1773px;top:108px;width:8px;height:1px;background:#1a8cf0;"></div>
<div class="t" style="left:1669px;top:122px;color:#1a8cf0;">…</div>
<div class="t" style="left:1685px;top:122px;color:#e8d44d;">#I:#P #W:#T</div>
<div class="t" style="left:1773px;top:122px;color:#e0e0e0;">"</div>
<div class="t" style="left:1461px;top:139px;color:#a0a0a0;font-style:italic;">93</div>
<div class="t" style="left:1461px;top:156px;color:#22e060;font-weight:bold;">94</div>
<div class="r" style="left:1485px;top:156px;width:288px;height:17px;background:#0e3c2e;"></div>
<div class="r" style="left:1565px;top:156px;width:80px;height:17px;background:#0a780a;"></div>
<div class="t" style="left:1485px;top:156px;color:#e0e0e0;">+# Enable </div>
<div class="t" style="left:1565px;top:156px;color:#ffffff;font-weight:bold;">aggressive</div>
<div class="t" style="left:1645px;top:156px;color:#e0e0e0;"> resize</div>
<div class="t" style="left:1461px;top:173px;color:#a0a0a0;font-style:italic;">95</div>
<div class="t" style="left:1493px;top:173px;color:#e0e0e0;">set-window-option -g aggressive-res</div>
<div class="r" style="left:1773px;top:176px;width:8px;height:1px;background:#1a8cf0;"></div>
<div class="t" style="left:1725px;top:190px;color:#1a8cf0;">…</div>
<div class="t" style="left:1733px;top:190px;color:#e0e0e0;">ize on</div>
<div class="t" style="left:1461px;top:207px;color:#a0a0a0;font-style:italic;">96</div>
<div class="t" style="left:1461px;top:224px;color:#a0a0a0;font-style:italic;">97</div>
<div class="t" style="left:1493px;top:224px;color:#e0e0e0;"># Keep tmux open when closing </div>
<div class="t" style="left:1733px;top:224px;color:#e8d44d;">a</div>
<div class="t" style="left:1741px;top:224px;color:#e0e0e0;"> ses</div>
<div class="r" style="left:1773px;top:227px;width:8px;height:1px;background:#1a8cf0;"></div>
<div class="t" style="left:1741px;top:241px;color:#1a8cf0;">…</div>
<div class="t" style="left:1749px;top:241px;color:#e0e0e0;">sion</div>
<div class="r" style="left:1129px;top:487px;width:657px;height:1px;background:#c0c0c0;"></div>
<div class="r" style="left:1129px;top:521px;width:657px;height:1px;background:#c0c0c0;"></div>
<div class="r" style="left:1129px;top:487px;width:1px;height:35px;background:#c0c0c0;"></div>
<div class="r" style="left:1785px;top:487px;width:1px;height:35px;background:#c0c0c0;"></div>
<div class="r" style="left:1141px;top:479px;width:88px;height:17px;background:#000;"></div>
<div class="t" style="left:1141px;top:479px;color:#e0e0e0;">Command log</div>
<div class="t" style="left:1133px;top:496px;color:#ffe000;">Random tip</div>
<div class="t" style="left:1213px;top:496px;color:#e0e0e0;">:</div>
<div class="t" style="left:1229px;top:496px;color:#22e000;">To revert a commit, press 't' on that commit</div>
<svg class="r" style="left:902px;top:567px;" width="7" height="11" viewBox="0 0 7 11"><path d="M1.5 1 L5.5 5.5 L1.5 10" fill="none" stroke="#22ee00" stroke-width="1.8"/></svg>
<div class="t" style="left:917px;top:564px;color:#22ee00;">neofetch</div>
<div class="t" style="left:901px;top:581px;color:#5ff967;font-weight:bold;">                    'c.</div>
<div class="t" style="left:901px;top:598px;color:#5ff967;font-weight:bold;">                 ,xNMM.</div>
<div class="t" style="left:901px;top:615px;color:#5ff967;font-weight:bold;">               .OMMMMo</div>
<div class="t" style="left:901px;top:632px;color:#5ff967;font-weight:bold;">               OMMM0,</div>
<div class="t" style="left:901px;top:649px;color:#5ff967;font-weight:bold;">     .;loddo:' loolloddol;.</div>
<div class="t" style="left:901px;top:666px;color:#5ff967;font-weight:bold;">   cKMMMMMMMMMMNWMMMMMMMMMM0:</div>
<div class="t" style="left:901px;top:683px;color:#fefb67;font-weight:bold;"> .KMMMMMMMMMMMMMMMMMMMMMMMWd.</div>
<div class="t" style="left:901px;top:700px;color:#fefb67;font-weight:bold;"> XMMMMMMMMMMMMMMMMMMMMMMMX.</div>
<div class="t" style="left:901px;top:717px;color:#ff6e67;font-weight:bold;">;MMMMMMMMMMMMMMMMMMMMMMMM:</div>
<div class="t" style="left:901px;top:734px;color:#ff6e67;font-weight:bold;">:MMMMMMMMMMMMMMMMMMMMMMMM:</div>
<div class="t" style="left:901px;top:751px;color:#ff6e67;font-weight:bold;">.MMMMMMMMMMMMMMMMMMMMMMMMX.</div>
<div class="t" style="left:901px;top:768px;color:#ff6e67;font-weight:bold;"> kMMMMMMMMMMMMMMMMMMMMMMMMWd.</div>
<div class="t" style="left:901px;top:785px;color:#ff77ff;font-weight:bold;"> .XMMMMMMMMMMMMMMMMMMMMMMMMMMk</div>
<div class="t" style="left:901px;top:802px;color:#ff77ff;font-weight:bold;">  .XMMMMMMMMMMMMMMMMMMMMMMMMK.</div>
<div class="t" style="left:901px;top:819px;color:#2a8ae6;font-weight:bold;">    kMMMMMMMMMMMMMMMMMMMMMMd</div>
<div class="t" style="left:901px;top:836px;color:#2a8ae6;font-weight:bold;">     ;KMMMMMMMWXXWMMMMMMMk.</div>
<div class="t" style="left:901px;top:853px;color:#2a8ae6;font-weight:bold;">       .cooc,.    .,coo:.</div>
<div class="t" style="left:1165px;top:581px;color:#5ff967;font-weight:bold;">abhishek</div>
<div class="t" style="left:1229px;top:581px;color:#c8c8c8;font-weight:bold;">@</div>
<div class="t" style="left:1237px;top:581px;color:#5ff967;font-weight:bold;">Abhisheks-MacBook-Pro.local</div>
<div class="r" style="left:1166px;top:606px;width:286px;height:1px;background:#b0b0b0;"></div>
<div class="t" style="left:1165px;top:615px;color:#fefb67;font-weight:bold;">OS</div>
<div class="t" style="left:1181px;top:615px;color:#d0d0d0;">:</div>
<div class="t" style="left:1197px;top:615px;color:#c8c8c8;">macOS 14.4 23E214 arm64</div>
<div class="t" style="left:1165px;top:632px;color:#fefb67;font-weight:bold;">Host</div>
<div class="t" style="left:1197px;top:632px;color:#d0d0d0;">:</div>
<div class="t" style="left:1213px;top:632px;color:#c8c8c8;">Mac15,6</div>
<div class="t" style="left:1165px;top:649px;color:#fefb67;font-weight:bold;">Kernel</div>
<div class="t" style="left:1213px;top:649px;color:#d0d0d0;">:</div>
<div class="t" style="left:1229px;top:649px;color:#c8c8c8;">23.4.0</div>
<div class="t" style="left:1165px;top:666px;color:#fefb67;font-weight:bold;">Uptime</div>
<div class="t" style="left:1213px;top:666px;color:#d0d0d0;">:</div>
<div class="t" style="left:1229px;top:666px;color:#c8c8c8;">25 mins</div>
<div class="t" style="left:1165px;top:683px;color:#fefb67;font-weight:bold;">Packages</div>
<div class="t" style="left:1229px;top:683px;color:#d0d0d0;">:</div>
<div class="t" style="left:1245px;top:683px;color:#c8c8c8;">110 (brew)</div>
<div class="t" style="left:1165px;top:700px;color:#fefb67;font-weight:bold;">Shell</div>
<div class="t" style="left:1205px;top:700px;color:#d0d0d0;">:</div>
<div class="t" style="left:1221px;top:700px;color:#c8c8c8;">zsh 5.9</div>
<div class="t" style="left:1165px;top:717px;color:#fefb67;font-weight:bold;">Resolution</div>
<div class="t" style="left:1245px;top:717px;color:#d0d0d0;">:</div>
<div class="t" style="left:1261px;top:717px;color:#c8c8c8;">1800x1169</div>
<div class="t" style="left:1165px;top:734px;color:#fefb67;font-weight:bold;">DE</div>
<div class="t" style="left:1181px;top:734px;color:#d0d0d0;">:</div>
<div class="t" style="left:1197px;top:734px;color:#c8c8c8;">Aqua</div>
<div class="t" style="left:1165px;top:751px;color:#fefb67;font-weight:bold;">WM</div>
<div class="t" style="left:1181px;top:751px;color:#d0d0d0;">:</div>
<div class="t" style="left:1197px;top:751px;color:#c8c8c8;">yabai</div>
<div class="t" style="left:1165px;top:768px;color:#fefb67;font-weight:bold;">Terminal</div>
<div class="t" style="left:1229px;top:768px;color:#d0d0d0;">:</div>
<div class="t" style="left:1245px;top:768px;color:#c8c8c8;">tmux</div>
<div class="t" style="left:1165px;top:785px;color:#fefb67;font-weight:bold;">CPU</div>
<div class="t" style="left:1189px;top:785px;color:#d0d0d0;">:</div>
<div class="t" style="left:1205px;top:785px;color:#c8c8c8;">Apple M3 Pro</div>
<div class="t" style="left:1165px;top:802px;color:#fefb67;font-weight:bold;">GPU</div>
<div class="t" style="left:1189px;top:802px;color:#d0d0d0;">:</div>
<div class="t" style="left:1205px;top:802px;color:#c8c8c8;">Apple M3 Pro</div>
<div class="t" style="left:1165px;top:819px;color:#fefb67;font-weight:bold;">Memory</div>
<div class="t" style="left:1213px;top:819px;color:#d0d0d0;">:</div>
<div class="t" style="left:1229px;top:819px;color:#c8c8c8;">2346MiB / 18432MiB</div>
<div class="r" style="left:1165px;top:852px;width:24px;height:17px;background:#000000;"></div>
<div class="r" style="left:1165px;top:869px;width:24px;height:17px;background:#6c6c6c;"></div>
<div class="r" style="left:1189px;top:852px;width:24px;height:17px;background:#ff0055;"></div>
<div class="r" style="left:1189px;top:869px;width:24px;height:17px;background:#ff6e67;"></div>
<div class="r" style="left:1213px;top:852px;width:24px;height:17px;background:#22ff00;"></div>
<div class="r" style="left:1213px;top:869px;width:24px;height:17px;background:#5ff967;"></div>
<div class="r" style="left:1237px;top:852px;width:24px;height:17px;background:#ffe500;"></div>
<div class="r" style="left:1237px;top:869px;width:24px;height:17px;background:#fefb67;"></div>
<div class="r" style="left:1261px;top:852px;width:24px;height:17px;background:#1a8cf0;"></div>
<div class="r" style="left:1261px;top:869px;width:24px;height:17px;background:#2a8ae6;"></div>
<div class="r" style="left:1285px;top:852px;width:24px;height:17px;background:#e800ff;"></div>
<div class="r" style="left:1285px;top:869px;width:24px;height:17px;background:#ff77ff;"></div>
<div class="r" style="left:1309px;top:852px;width:24px;height:17px;background:#1adcdc;"></div>
<div class="r" style="left:1309px;top:869px;width:24px;height:17px;background:#5ffdff;"></div>
<div class="r" style="left:1333px;top:852px;width:24px;height:17px;background:#e0e0e0;"></div>
<div class="r" style="left:1333px;top:869px;width:24px;height:17px;background:#ffffff;"></div>
<div class="t" style="left:1749px;top:904px;color:#c0c0c0;">/3.2s</div>
<div class="r" style="left:905px;top:946px;width:4px;height:1px;background:#6a6a6a;"></div>
<div class="r" style="left:905px;top:946px;width:1px;height:17px;background:#6a6a6a;"></div>
<div class="r" style="left:905px;top:962px;width:4px;height:1px;background:#6a6a6a;"></div>
<svg class="r" style="left:909px;top:937px;" width="41" height="17" viewBox="0 0 41 17"><path d="M0 8.5 L8 0 H36 L41 8.5 L36 17 H8 Z" fill="#e0e0e0"/></svg>
<svg class="r" style="left:924px;top:938px;" width="14" height="15" viewBox="0 0 14 15"><g transform="scale(1.12)"><path d="M8.2 0.5 C8.3 1.8 7.3 3.2 6 3.2 C5.9 2 6.9 0.7 8.2 0.5 Z M6 4 C6.8 4 7.6 3.5 8.3 3.5 C9.3 3.5 10.3 4.2 10.8 5 C9.5 5.8 9.3 7.8 10.9 8.8 C10.4 10.3 9.4 12 8.3 12 C7.5 12 7.2 11.5 6.2 11.5 C5.2 11.5 4.8 12 4 12 C2.6 12 0.8 9.3 0.8 6.8 C0.8 4.7 2.2 3.5 3.6 3.5 C4.6 3.5 5.3 4 6 4 Z" fill="#000"/></g></svg>
<svg class="r" style="left:943px;top:937px;" width="166" height="17" viewBox="0 0 166 17"><path d="M0 0 H158 L166 8.5 L158 17 H0 Z" fill="#1a8cf0"/></svg>
<svg class="r" style="left:909px;top:937px;" width="41" height="17" viewBox="0 0 41 17"><path d="M0 8.5 L8 0 H33 L41 8.5 L33 17 H8 Z" fill="#e0e0e0"/></svg>
<svg class="r" style="left:924px;top:938px;" width="14" height="15" viewBox="0 0 14 15"><g transform="scale(1.12)"><path d="M8.2 0.5 C8.3 1.8 7.3 3.2 6 3.2 C5.9 2 6.9 0.7 8.2 0.5 Z M6 4 C6.8 4 7.6 3.5 8.3 3.5 C9.3 3.5 10.3 4.2 10.8 5 C9.5 5.8 9.3 7.8 10.9 8.8 C10.4 10.3 9.4 12 8.3 12 C7.5 12 7.2 11.5 6.2 11.5 C5.2 11.5 4.8 12 4 12 C2.6 12 0.8 9.3 0.8 6.8 C0.8 4.7 2.2 3.5 3.6 3.5 C4.6 3.5 5.3 4 6 4 Z" fill="#000"/></g></svg>
<svg class="r" style="left:957px;top:940px;" width="16" height="11" viewBox="0 0 16 11"><path d="M0 1 H5 L6.5 2.5 H12 V4.5 H3.5 L0.5 10.5 Z M3.8 5.5 H15.5 L12.5 10.5 H1.2 Z" fill="#0a1a30"/></svg>
<div class="t" style="left:981px;top:938px;color:#0a1a30;">~/</div>
<div class="t" style="left:997px;top:938px;color:#b8d0f0;">.t</div>
<div class="t" style="left:1013px;top:938px;color:#0a1a30;">/</div>
<div class="t" style="left:1021px;top:938px;color:#b8d0f0;">pl</div>
<div class="t" style="left:1037px;top:938px;color:#0a1a30;">/tmux2k</div>
<svg class="r" style="left:1101px;top:937px;" width="104" height="17" viewBox="0 0 104 17"><path d="M0 0 H96 L104 8.5 L96 17 H0 L8 8.5 Z" fill="#22ee00"/></svg>
<svg class="r" style="left:1117px;top:940px;" width="13" height="12" viewBox="0 0 13 12"><path d="M1 1 L4 3.5 H9 L12 1 L12.5 6.5 C12.5 9.5 10 11.5 6.5 11.5 C3 11.5 0.5 9.5 0.5 6.5 Z" fill="#102010"/><circle cx="4.3" cy="7.2" r="1.1" fill="#22ee00"/><circle cx="8.7" cy="7.2" r="1.1" fill="#22ee00"/></svg>
<svg class="r" style="left:1141px;top:939px" width="12" height="13" viewBox="0 0 12 13"><circle cx="3" cy="2.5" r="1.8" fill="none" stroke="#102010" stroke-width="1.3"/><circle cx="9" cy="2.5" r="1.8" fill="none" stroke="#102010" stroke-width="1.3"/><circle cx="3" cy="10.5" r="1.8" fill="none" stroke="#102010" stroke-width="1.3"/><path d="M3 4.3 V8.7 M9 4.3 V5 Q9 6.8 6.5 6.8 H3" fill="none" stroke="#102010" stroke-width="1.3"/></svg>
<div class="t" style="left:1157px;top:938px;color:#102010;">main</div>
<svg class="r" style="left:1197px;top:937px;" width="152" height="17" viewBox="0 0 152 17"><path d="M0 0 H144 L152 8.5 L144 17 H0 L8 8.5 Z" fill="#1adcdc"/></svg>
<svg class="r" style="left:1213px;top:939px;" width="13" height="13" viewBox="0 0 13 13"><circle cx="6.5" cy="6.5" r="5.2" fill="none" stroke="#102020" stroke-width="1.4"/><path d="M6.5 3.5 V6.8 H4" fill="none" stroke="#102020" stroke-width="1.3"/></svg>
<div class="t" style="left:1237px;top:938px;color:#102020;">Mon, 4:44 AM</div>
<div class="r" style="left:1368px;top:944px;width:2px;height:2px;background:#5a5a5a;"></div>
<div class="r" style="left:1376px;top:944px;width:2px;height:2px;background:#5a5a5a;"></div>
<div class="r" style="left:1384px;top:944px;width:2px;height:2px;background:#5a5a5a;"></div>
<div class="r" style="left:1392px;top:944px;width:2px;height:2px;background:#5a5a5a;"></div>
<div class="r" style="left:1400px;top:944px;width:2px;height:2px;background:#5a5a5a;"></div>
<div class="r" style="left:1408px;top:944px;width:2px;height:2px;background:#5a5a5a;"></div>
<div class="r" style="left:1416px;top:944px;width:2px;height:2px;background:#5a5a5a;"></div>
<div class="r" style="left:1424px;top:944px;width:2px;height:2px;background:#5a5a5a;"></div>
<div class="r" style="left:1432px;top:944px;width:2px;height:2px;background:#5a5a5a;"></div>
<div class="r" style="left:1440px;top:944px;width:2px;height:2px;background:#5a5a5a;"></div>
<div class="r" style="left:1448px;top:944px;width:2px;height:2px;background:#5a5a5a;"></div>
<div class="r" style="left:1456px;top:944px;width:2px;height:2px;background:#5a5a5a;"></div>
<div class="r" style="left:1464px;top:944px;width:2px;height:2px;background:#5a5a5a;"></div>
<div class="r" style="left:1472px;top:944px;width:2px;height:2px;background:#5a5a5a;"></div>
<div class="r" style="left:1480px;top:944px;width:2px;height:2px;background:#5a5a5a;"></div>
<div class="r" style="left:1488px;top:944px;width:2px;height:2px;background:#5a5a5a;"></div>
<div class="r" style="left:1496px;top:944px;width:2px;height:2px;background:#5a5a5a;"></div>
<div class="r" style="left:1504px;top:944px;width:2px;height:2px;background:#5a5a5a;"></div>
<div class="r" style="left:1512px;top:944px;width:2px;height:2px;background:#5a5a5a;"></div>
<div class="r" style="left:1520px;top:944px;width:2px;height:2px;background:#5a5a5a;"></div>
<div class="r" style="left:1528px;top:944px;width:2px;height:2px;background:#5a5a5a;"></div>
<div class="r" style="left:1536px;top:944px;width:2px;height:2px;background:#5a5a5a;"></div>
<div class="r" style="left:1544px;top:944px;width:2px;height:2px;background:#5a5a5a;"></div>
<div class="r" style="left:1552px;top:944px;width:2px;height:2px;background:#5a5a5a;"></div>
<div class="r" style="left:1560px;top:944px;width:2px;height:2px;background:#5a5a5a;"></div>
<div class="r" style="left:1568px;top:944px;width:2px;height:2px;background:#5a5a5a;"></div>
<div class="r" style="left:1576px;top:944px;width:2px;height:2px;background:#5a5a5a;"></div>
<div class="r" style="left:1584px;top:944px;width:2px;height:2px;background:#5a5a5a;"></div>
<div class="r" style="left:1592px;top:944px;width:2px;height:2px;background:#5a5a5a;"></div>
<div class="r" style="left:1600px;top:944px;width:2px;height:2px;background:#5a5a5a;"></div>
<div class="r" style="left:1608px;top:944px;width:2px;height:2px;background:#5a5a5a;"></div>
<div class="r" style="left:1616px;top:944px;width:2px;height:2px;background:#5a5a5a;"></div>
<div class="r" style="left:1624px;top:944px;width:2px;height:2px;background:#5a5a5a;"></div>
<div class="r" style="left:1632px;top:944px;width:2px;height:2px;background:#5a5a5a;"></div>
<div class="r" style="left:1640px;top:944px;width:2px;height:2px;background:#5a5a5a;"></div>
<div class="r" style="left:1648px;top:944px;width:2px;height:2px;background:#5a5a5a;"></div>
<div class="r" style="left:1656px;top:944px;width:2px;height:2px;background:#5a5a5a;"></div>
<div class="r" style="left:1664px;top:944px;width:2px;height:2px;background:#5a5a5a;"></div>
<div class="r" style="left:1672px;top:944px;width:2px;height:2px;background:#5a5a5a;"></div>
<div class="r" style="left:1680px;top:944px;width:2px;height:2px;background:#5a5a5a;"></div>
<div class="r" style="left:1688px;top:944px;width:2px;height:2px;background:#5a5a5a;"></div>
<div class="r" style="left:1696px;top:944px;width:2px;height:2px;background:#5a5a5a;"></div>
<div class="r" style="left:1704px;top:944px;width:2px;height:2px;background:#5a5a5a;"></div>
<div class="r" style="left:1712px;top:944px;width:2px;height:2px;background:#5a5a5a;"></div>
<div class="r" style="left:1720px;top:944px;width:2px;height:2px;background:#5a5a5a;"></div>
<div class="r" style="left:1728px;top:944px;width:2px;height:2px;background:#5a5a5a;"></div>
<div class="r" style="left:1736px;top:944px;width:2px;height:2px;background:#5a5a5a;"></div>
<div class="r" style="left:1744px;top:944px;width:2px;height:2px;background:#5a5a5a;"></div>
<div class="r" style="left:1752px;top:944px;width:2px;height:2px;background:#5a5a5a;"></div>
<div class="r" style="left:1760px;top:944px;width:2px;height:2px;background:#5a5a5a;"></div>
<div class="r" style="left:1765px;top:945px;width:13px;height:1px;background:#6a6a6a;"></div>
<div class="r" style="left:1777px;top:945px;width:1px;height:18px;background:#6a6a6a;"></div>
<div class="r" style="left:1765px;top:962px;width:13px;height:1px;background:#6a6a6a;"></div>
<svg class="r" style="left:909px;top:954px;" width="48" height="17" viewBox="0 0 48 17"><path d="M0 8.5 L8 0 H40 L48 8.5 L40 17 H8 Z" fill="#e0e0e0"/></svg>
<svg class="r" style="left:925px;top:955px;" width="14" height="14" viewBox="0 0 14 14"><path d="M12 1 C8 1 5.5 3 3.8 6 L1 6.5 L0.5 8 L3 8.2 L4.8 10 L5 12.5 L6.5 12 L7 9.2 C10 7.5 12 5 12 1 Z" fill="#000"/><path d="M2.5 10.5 L0.5 12.5" stroke="#000" stroke-width="1.3"/></svg>
<svg class="r" style="left:941px;top:957px;" width="8" height="11" viewBox="0 0 8 11"><path d="M1.5 1 L6 5.5 L1.5 10" fill="none" stroke="#000" stroke-width="2"/></svg>
<svg class="r" style="left:1461px;top:954px;" width="112" height="17" viewBox="0 0 112 17"><path d="M8 0 H112 V17 H8 L0 8.5 Z" fill="#22ee00"/></svg>
<svg class="r" style="left:1477px;top:958px;" width="10" height="10" viewBox="0 0 10 10"><path d="M0.8 5.5 L3.8 8.8 L9.2 1.2" fill="none" stroke="#102010" stroke-width="2.2"/></svg>
<div class="t" style="left:1493px;top:955px;color:#102010;">3.22s</div>
<svg class="r" style="left:1545px;top:956px;" width="9" height="13" viewBox="0 0 9 13"><path d="M0.5 0.5 H8.5 M0.5 12.5 H8.5 M1.5 0.5 C1.5 4 4.5 5 4.5 6.5 C4.5 8 1.5 9 1.5 12.5 M7.5 0.5 C7.5 4 4.5 5 4.5 6.5 C4.5 8 7.5 9 7.5 12.5" fill="none" stroke="#102010" stroke-width="1.3"/><path d="M2.5 11.5 L4.5 9 L6.5 11.5 Z" fill="#102010"/></svg>
<svg class="r" style="left:1565px;top:954px;" width="42" height="17" viewBox="0 0 42 17"><path d="M8 0 H42 V17 H8 L0 8.5 Z" fill="#1a8cf0"/></svg>
<svg class="r" style="left:1578px;top:957px;" width="12" height="11" viewBox="0 0 12 11"><path d="M0.5 0.5 H3.5 L5.5 8 L9 0.5 H11.5 L6 10.5 H3.5 Z" fill="#0a1a30"/></svg>
<svg class="r" style="left:1597px;top:954px;" width="96" height="17" viewBox="0 0 96 17"><path d="M8 0 H96 V17 H8 L0 8.5 Z" fill="#ffe000"/></svg>
<div class="t" style="left:1613px;top:955px;color:#201a00;">7.91G</div>
<svg class="r" style="left:1661px;top:956px;" width="14" height="12" viewBox="0 0 14 12"><path d="M0.5 11 A6.5 6.5 0 1 1 13.5 11 Z" fill="#201a00"/><circle cx="7" cy="9" r="1.5" fill="#ffe000"/><path d="M7 9 L10 4" stroke="#ffe000" stroke-width="1.2"/><circle cx="3.5" cy="7" r="0.8" fill="#ffe000"/><circle cx="5" cy="4" r="0.8" fill="#ffe000"/></svg>
<svg class="r" style="left:1685px;top:954px;" width="81" height="17" viewBox="0 0 81 17"><path d="M8 0 H73 L81 8.5 L73 17 H8 L0 8.5 Z" fill="#1adcdc"/></svg>
<div class="t" style="left:1701px;top:955px;color:#102020;">67%</div>
<svg class="r" style="left:1733px;top:958px;" width="18" height="10" viewBox="0 0 18 10"><rect x="0.7" y="0.7" width="14.5" height="8.5" rx="1.5" fill="none" stroke="#102020" stroke-width="1.3"/><rect x="2.5" y="2.5" width="11" height="5" fill="#102020"/><rect x="15.5" y="3" width="2" height="4" fill="#102020"/></svg>
<div class="r" style="left:5px;top:1107px;width:1784px;height:17px;background:#17172b;"></div>
<svg class="r" style="left:5px;top:1107px;" width="152" height="17" viewBox="0 0 152 17"><path d="M0 0 H144 L152 8.5 L144 17 H0 Z" fill="#3cd60c"/></svg>
<svg class="r" style="left:13px;top:1109px;" width="11" height="13" viewBox="0 0 11 13"><rect x="0.7" y="0.7" width="9.6" height="11.6" fill="none" stroke="#101010" stroke-width="1.2"/><path d="M5.5 0.7 V12.3 M5.5 6.5 H10.3" stroke="#101010" stroke-width="1.2"/></svg>
<svg class="r" style="left:37px;top:1109px;" width="13" height="13" viewBox="0 0 13 13"><circle cx="6.5" cy="6.5" r="5.6" fill="none" stroke="#101010" stroke-width="1.2"/><path d="M6.5 5.5 V10" stroke="#101010" stroke-width="1.5"/><circle cx="6.5" cy="3.6" r="0.9" fill="#101010"/></svg>
<div class="t" style="left:61px;top:1108px;color:#101010;">1</div>
<svg class="r" style="left:77px;top:1109px;" width="12" height="13" viewBox="0 0 12 13"><rect x="0.7" y="0.7" width="10.6" height="11.6" fill="none" stroke="#101010" stroke-width="1.2"/><circle cx="6" cy="6.5" r="1.3" fill="#101010"/></svg>
<div class="t" style="left:93px;top:1108px;color:#101010;">main</div>
<svg class="r" style="left:133px;top:1109px" width="12" height="13" viewBox="0 0 12 13"><circle cx="3" cy="2.5" r="1.8" fill="none" stroke="#101010" stroke-width="1.1"/><circle cx="9" cy="2.5" r="1.8" fill="none" stroke="#101010" stroke-width="1.1"/><circle cx="3" cy="10.5" r="1.8" fill="none" stroke="#101010" stroke-width="1.1"/><path d="M3 4.3 V8.7 M9 4.3 V5 Q9 6.8 6.5 6.8 H3" fill="none" stroke="#101010" stroke-width="1.1"/></svg>
<svg class="r" style="left:149px;top:1107px;" width="88" height="17" viewBox="0 0 88 17"><path d="M0 0 H80 L88 8.5 L80 17 H0 L8 8.5 Z" fill="#1a8cf0"/></svg>
<svg class="r" style="left:165px;top:1110px;" width="15" height="11" viewBox="0 0 15 11"><rect x="0.6" y="0.6" width="13.8" height="2.8" fill="none" stroke="#101010" stroke-width="1"/><rect x="0.6" y="4.1" width="13.8" height="2.8" fill="none" stroke="#101010" stroke-width="1"/><rect x="0.6" y="7.6" width="13.8" height="2.8" fill="none" stroke="#101010" stroke-width="1"/></svg>
<div class="t" style="left:197px;top:1108px;color:#101010;">9%</div>
<svg class="r" style="left:229px;top:1107px;" width="112" height="17" viewBox="0 0 112 17"><path d="M0 0 H104 L112 8.5 L104 17 H0 L8 8.5 Z" fill="#ffd21a"/></svg>
<svg class="r" style="left:245px;top:1109px;" width="14" height="12" viewBox="0 0 14 12"><path d="M0.5 11.5 A6.5 6.5 0 1 1 13.5 11.5 Z" fill="#101010"/><circle cx="7" cy="9" r="1.5" fill="#ffd21a"/><path d="M7 9 L10 4" stroke="#ffd21a" stroke-width="1.2"/><circle cx="3.5" cy="7" r="0.8" fill="#ffd21a"/><circle cx="5" cy="4" r="0.8" fill="#ffd21a"/></svg>
<div class="t" style="left:261px;top:1108px;color:#101010;">9GB/18GB</div>
<svg class="r" style="left:797px;top:1107px;" width="113" height="17" viewBox="0 0 113 17"><rect x="0" y="0" width="113" height="17" rx="8.5" fill="#1a8cf0"/></svg>
<div class="t" style="left:805px;top:1108px;color:#f0f0f0;font-weight:bold;">*</div>
<div class="t" style="left:821px;top:1108px;color:#101010;font-weight:bold;">1:lazygit</div>
<svg class="r" style="left:917px;top:1107px;" width="81" height="17" viewBox="0 0 81 17"><rect x="0" y="0" width="81" height="17" rx="8.5" fill="#3a3a4c"/></svg>
<div class="t" style="left:925px;top:1108px;color:#ff2266;font-weight:bold;">-</div>
<div class="t" style="left:941px;top:1108px;color:#d8d8d8;font-weight:bold;">2:zsh</div>
<svg class="r" style="left:1509px;top:1107px;" width="80" height="17" viewBox="0 0 80 17"><path d="M8 0 H80 V17 H8 L0 8.5 Z" fill="#ff5fb4"/></svg>
<svg class="r" style="left:1525px;top:1110px;" width="17" height="11" viewBox="0 0 17 11"><rect x="0.6" y="0.6" width="14" height="9.8" rx="1.5" fill="none" stroke="#101010" stroke-width="1.1"/><rect x="2.5" y="2.5" width="5" height="6" fill="#101010"/><rect x="15" y="3" width="1.6" height="5" fill="#101010"/></svg>
<div class="t" style="left:1549px;top:1108px;color:#101010;">67%</div>
<svg class="r" style="left:1581px;top:1107px;" width="80" height="17" viewBox="0 0 80 17"><path d="M8 0 H80 V17 H8 L0 8.5 Z" fill="#b25af5"/></svg>
<svg class="r" style="left:1597px;top:1110px;" width="15" height="12" viewBox="0 0 15 12"><path d="M1 4.5 A9 9 0 0 1 14 4.5 M3.3 6.8 A5.8 5.8 0 0 1 11.7 6.8 M5.5 9 A2.8 2.8 0 0 1 9.5 9" fill="none" stroke="#101010" stroke-width="1.5"/><circle cx="7.5" cy="10.8" r="1.1" fill="#101010"/></svg>
<div class="t" style="left:1613px;top:1108px;color:#101010;">F5G</div>
<svg class="r" style="left:1645px;top:1107px;" width="144" height="17" viewBox="0 0 144 17"><path d="M8 0 H144 V17 H8 L0 8.5 Z" fill="#1adcdc"/></svg>
<svg class="r" style="left:1661px;top:1109px;" width="13" height="13" viewBox="0 0 13 13"><circle cx="6.5" cy="6.5" r="5.4" fill="none" stroke="#101010" stroke-width="1.3"/><path d="M6.5 3.2 V6.8 H4" fill="none" stroke="#101010" stroke-width="1.2"/></svg>
<div class="t" style="left:1677px;top:1108px;color:#101010;">Mon 04:45 AM</div>
</div></body></html>
